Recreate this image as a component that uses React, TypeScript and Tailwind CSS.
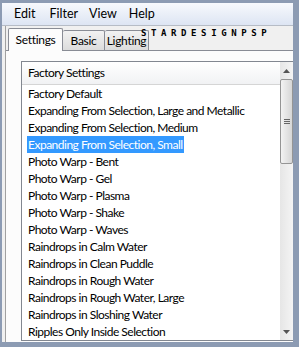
import React from "react";

const items = [
  "Factory Default",
  "Expanding From Selection, Large and Metallic",
  "Expanding From Selection, Medium",
  "Expanding From Selection, Small",
  "Photo Warp - Bent",
  "Photo Warp - Gel",
  "Photo Warp - Plasma",
  "Photo Warp - Shake",
  "Photo Warp - Waves",
  "Raindrops in Calm Water",
  "Raindrops in Clean Puddle",
  "Raindrops in Rough Water",
  "Raindrops in Rough Water, Large",
  "Raindrops in Sloshing Water",
  "Ripples Only Inside Selection",
];

export default function App() {
  const font = { fontFamily: "Lato, 'Liberation Sans', sans-serif" };
  return (
    <div
      className="w-[299px] h-[347px] bg-[#8c9bb3] pt-[3px] pl-[2px] pr-[6px] pb-[5px] text-[12px] text-black"
      style={font}
    >
      <div className="h-full flex flex-col bg-[#f0f0f0] overflow-hidden">
        {/* menu bar */}
        <div className="h-[23px] shrink-0 flex items-center bg-gradient-to-b from-[#f7f9fd] to-[#dde5f3] border-b border-[#b6bcc6] text-[12.5px]">
          <span className="ml-[12px]">Edit</span>
          <span className="ml-[14px]">Filter</span>
          <span className="ml-[11px]">View</span>
          <span className="ml-[12px]">Help</span>
        </div>
        {/* body */}
        <div className="flex-1 flex flex-col ml-[3px] border-l border-[#a0a0a0] relative">
          <div
            className="absolute left-[135px] top-[3px] text-[9px] font-bold tracking-[4.6px] leading-[9px]"
            style={{ fontFamily: "'DejaVu Sans Mono', monospace" }}
          >
            STARDESIGNPSP
          </div>
          {/* tabs */}
          <div className="h-[24px] shrink-0 flex items-end pl-[2px] tracking-[-0.3px]">
            <div className="relative z-10 h-[23px] w-[55px] bg-[#fcfcfc] border border-b-0 border-[#898c95] rounded-t-[2px] flex items-center justify-center -mb-[1px] pb-[1px]">
              Settings
            </div>
            <div className="h-[20px] w-[42px] bg-gradient-to-b from-[#f2f2f2] to-[#dcdcdc] border border-l-0 border-b-0 border-[#898c95] rounded-t-[2px] flex items-center justify-center">
              Basic
            </div>
            <div className="h-[20px] w-[44px] bg-gradient-to-b from-[#f2f2f2] to-[#dcdcdc] border border-l-0 border-b-0 border-[#898c95] rounded-t-[2px] flex items-center justify-center">
              Lighting
            </div>
          </div>
          {/* panel */}
          <div className="flex-1 bg-[#fcfcfc] border-t border-[#898c95] pl-[15px] pt-[10px] pb-[1px]">
            <div className="h-full bg-white border border-r-0 border-[#828790] flex tracking-[-0.5px]">
              <div className="flex-1 flex flex-col">
                <div className="h-[23px] shrink-0 flex items-center pl-[6px] bg-gradient-to-b from-[#ffffff] to-[#f1f2f4] border-b border-[#d5d5d5]">
                  Factory Settings
                </div>
                <div className="flex flex-col">
                  {items.map((t, i) => (
                    <div key={t} className="h-[17px] flex items-center pl-[5px]">
                      <span
                        className={
                          i === 3
                            ? "bg-[#3399ff] text-white px-[1px] leading-[17px]"
                            : "px-[1px] leading-[17px]"
                        }
                      >
                        {t}
                      </span>
                    </div>
                  ))}
                </div>
              </div>
              {/* scrollbar */}
              <div className="w-[13px] shrink-0 flex flex-col bg-gradient-to-r from-[#e6e6e6] to-[#f4f4f4]">
                <div className="h-[17px] flex items-center justify-center">
                  <svg width="7" height="4" viewBox="0 0 7 4">
                    <path d="M0 4 L3.5 0 L7 4 Z" fill="#555" />
                  </svg>
                </div>
                <div className="h-[85px] border border-[#959595] rounded-[2px] bg-gradient-to-r from-[#f3f3f3] to-[#d6d6d6] flex items-center justify-center">
                  <svg width="6" height="5" viewBox="0 0 6 5">
                    <path d="M0 0.5 H6 M0 2.5 H6 M0 4.5 H6" stroke="#666" strokeWidth="1" />
                  </svg>
                </div>
                <div className="flex-1" />
                <div className="h-[17px] flex items-center justify-center">
                  <svg width="7" height="4" viewBox="0 0 7 4">
                    <path d="M0 0 L3.5 4 L7 0 Z" fill="#555" />
                  </svg>
                </div>
              </div>
            </div>
          </div>
        </div>
      </div>
    </div>
  );
}
